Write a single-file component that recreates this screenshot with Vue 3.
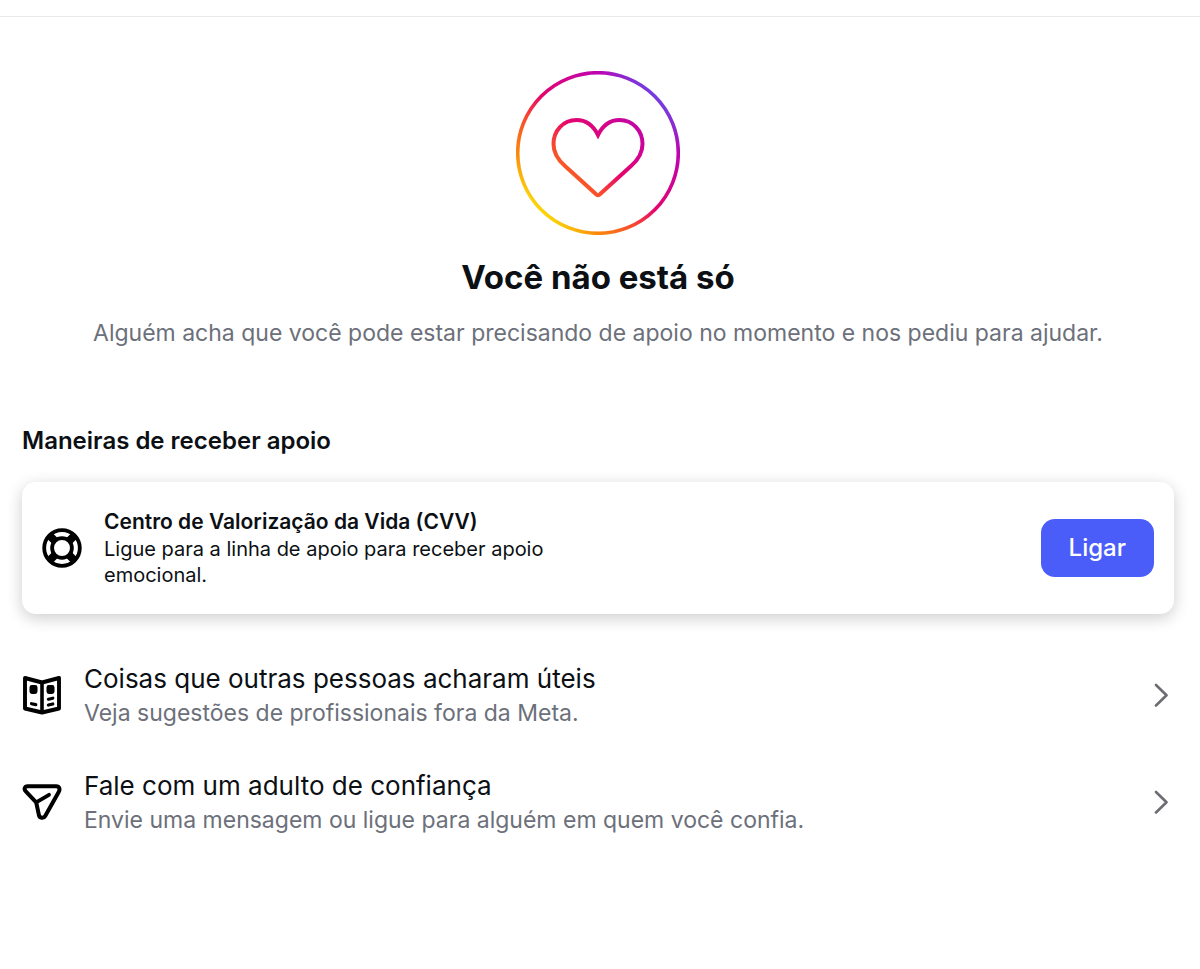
<template>
  <div class="page">
    <header class="top-bar"></header>

    <main class="content">
      <section class="hero">
        <svg class="hero-icon" viewBox="0 0 164 164" fill="none" aria-hidden="true">
          <defs>
            <linearGradient id="heroGradient" gradientUnits="userSpaceOnUse" x1="0" y1="164" x2="164" y2="0">
              <stop offset="0.15" stop-color="#fbd60a" />
              <stop offset="0.25" stop-color="#fa8a0c" />
              <stop offset="0.39" stop-color="#f9472f" />
              <stop offset="0.5" stop-color="#e6056c" />
              <stop offset="0.75" stop-color="#bd04b2" />
              <stop offset="0.85" stop-color="#733de2" />
            </linearGradient>
          </defs>
          <circle cx="82" cy="82" r="80.3" stroke="url(#heroGradient)" stroke-width="3.6" />
          <path
            d="M82 64C77 54 70 49 60.500 49C47 49 37.500 60 37.500 73C37.500 82 42 89 49 95L79.800 123Q82 125.500 84.200 123L115 95C122 89 126.500 82 126.500 73C126.500 60 117 49 103.500 49C94 49 87 54 82 64Z"
            stroke="url(#heroGradient)"
            stroke-width="4"
          />
        </svg>
        <h1 class="hero-title">Você não está só</h1>
        <p class="hero-text">Alguém acha que você pode estar precisando de apoio no momento e nos pediu para ajudar.</p>
      </section>

      <h2 class="section-title">Maneiras de receber apoio</h2>

      <section class="call-card">
        <svg class="icon" viewBox="0 0 40 40" fill="none" stroke="#000" aria-hidden="true">
          <circle cx="20" cy="20" r="17.800" stroke-width="3.800" />
          <circle cx="20" cy="20" r="9.900" stroke-width="3.800" />
          <path d="M8 8l6 6M32 8l-6 6M8 32l6-6M32 32l-6-6" stroke-width="8" />
        </svg>
        <div class="call-body">
          <h3 class="call-title">Centro de Valorização da Vida (CVV)</h3>
          <p class="call-text">Ligue para a linha de apoio para receber apoio emocional.</p>
        </div>
        <button class="call-btn" type="button">Ligar</button>
      </section>

      <nav class="links">
        <a v-for="item in links" :key="item.icon" class="link-row" href="#">
          <svg v-if="item.icon === 'book'" class="icon" viewBox="0 0 40 40" fill="none" stroke="#000" stroke-linejoin="round" stroke-linecap="round" aria-hidden="true">
            <path d="M3 3L20 7.500L37 3V33.500L20 37.500L3 33.500Z" stroke-width="3.900" />
            <path d="M20 7.500V37" stroke-width="3.600" stroke-linecap="butt" />
            <rect x="8.900" y="11.500" width="5.200" height="6" rx="1" fill="#000" stroke-width="2.800" />
            <rect x="25.900" y="11.500" width="5.200" height="6" rx="1" fill="#000" stroke-width="2.800" />
            <path d="M9.500 28.700l4.300.9M26.400 24.200l4.400-1M26.400 30l4.400-1" stroke-width="3.200" />
          </svg>
          <svg v-else class="icon" viewBox="0 0 40 40" fill="none" stroke="#000" stroke-linejoin="round" stroke-linecap="round" aria-hidden="true">
            <path d="M5.600 4.200H34.300C37.300 4.200 38.300 7.200 36.700 9.900L23.200 34C21.500 36.900 17.600 36.200 16.900 33L14.200 20.300L3.800 9.400C1.600 7 2.700 4.200 5.600 4.200Z" stroke-width="4" />
            <path d="M14.200 20.300L27 12.800" stroke-width="3.800" />
          </svg>
          <span class="link-body">
            <span class="link-title">{{ item.title }}</span>
            <span class="link-text">{{ item.text }}</span>
          </span>
          <svg class="chevron" viewBox="0 0 14 24" fill="none" aria-hidden="true">
            <path d="M2 2L12.500 12.300L2 22.500" stroke="#6b6d72" stroke-width="2.600" stroke-linecap="round" stroke-linejoin="round" />
          </svg>
        </a>
      </nav>
    </main>
  </div>
</template>

<script setup>
const links = [
  {
    icon: 'book',
    title: 'Coisas que outras pessoas acharam úteis',
    text: 'Veja sugestões de profissionais fora da Meta.'
  },
  {
    icon: 'send',
    title: 'Fale com um adulto de confiança',
    text: 'Envie uma mensagem ou ligue para alguém em quem você confia.'
  }
];
</script>

<style>
body {
  margin: 0;
  background: #fff;
}
</style>

<style scoped>
.page {
  font-family: Inter, "Liberation Sans", sans-serif;
  color: #0c1014;
}

.top-bar {
  height: 16px;
  border-bottom: 1px solid #e9e9e9;
}

.content {
  padding: 54px 26px 0 22px;
}

h1,
h2,
h3,
p {
  margin: 0;
}

.hero {
  display: flex;
  flex-direction: column;
  align-items: center;
  text-align: center;
}

.hero-icon {
  width: 164px;
  height: 164px;
}

.hero-title {
  margin-top: 20px;
  font-size: 33px;
  line-height: 44px;
  font-weight: 700;
}

.hero-text {
  margin-top: 18px;
  font-size: 23px;
  line-height: 32px;
  color: #6c707a;
}

.section-title {
  margin-top: 76px;
  font-size: 24px;
  line-height: 32px;
  font-weight: 600;
}

.call-card {
  display: flex;
  align-items: center;
  gap: 22px;
  margin-top: 25px;
  padding: 26px 20px;
  border-radius: 14px;
  background: #fff;
  box-shadow: 0 4px 16px rgba(0, 0, 0, 0.2);
}

.icon {
  flex: none;
  width: 40px;
  height: 40px;
}

.call-body {
  flex: 1;
}

.call-title {
  font-size: 21px;
  line-height: 28px;
  font-weight: 600;
}

.call-text {
  max-width: 480px;
  font-size: 20px;
  line-height: 26px;
}

.call-btn {
  padding: 0 28px;
  border: 0;
  border-radius: 14px;
  background: #4a5df9;
  color: #fff;
  font-family: inherit;
  font-size: 24px;
  line-height: 58px;
  font-weight: 500;
}

.links {
  display: flex;
  flex-direction: column;
  gap: 39px;
  margin-top: 47px;
}

.link-row {
  display: flex;
  align-items: center;
  gap: 22px;
  padding-right: 6px;
  color: inherit;
  text-decoration: none;
}

.link-body {
  flex: 1;
  display: flex;
  flex-direction: column;
}

.link-title {
  font-size: 26px;
  line-height: 36px;
}

.link-text {
  font-size: 23px;
  line-height: 32px;
  color: #6c707a;
}

.chevron {
  flex: none;
  width: 14px;
  height: 24px;
}
</style>
